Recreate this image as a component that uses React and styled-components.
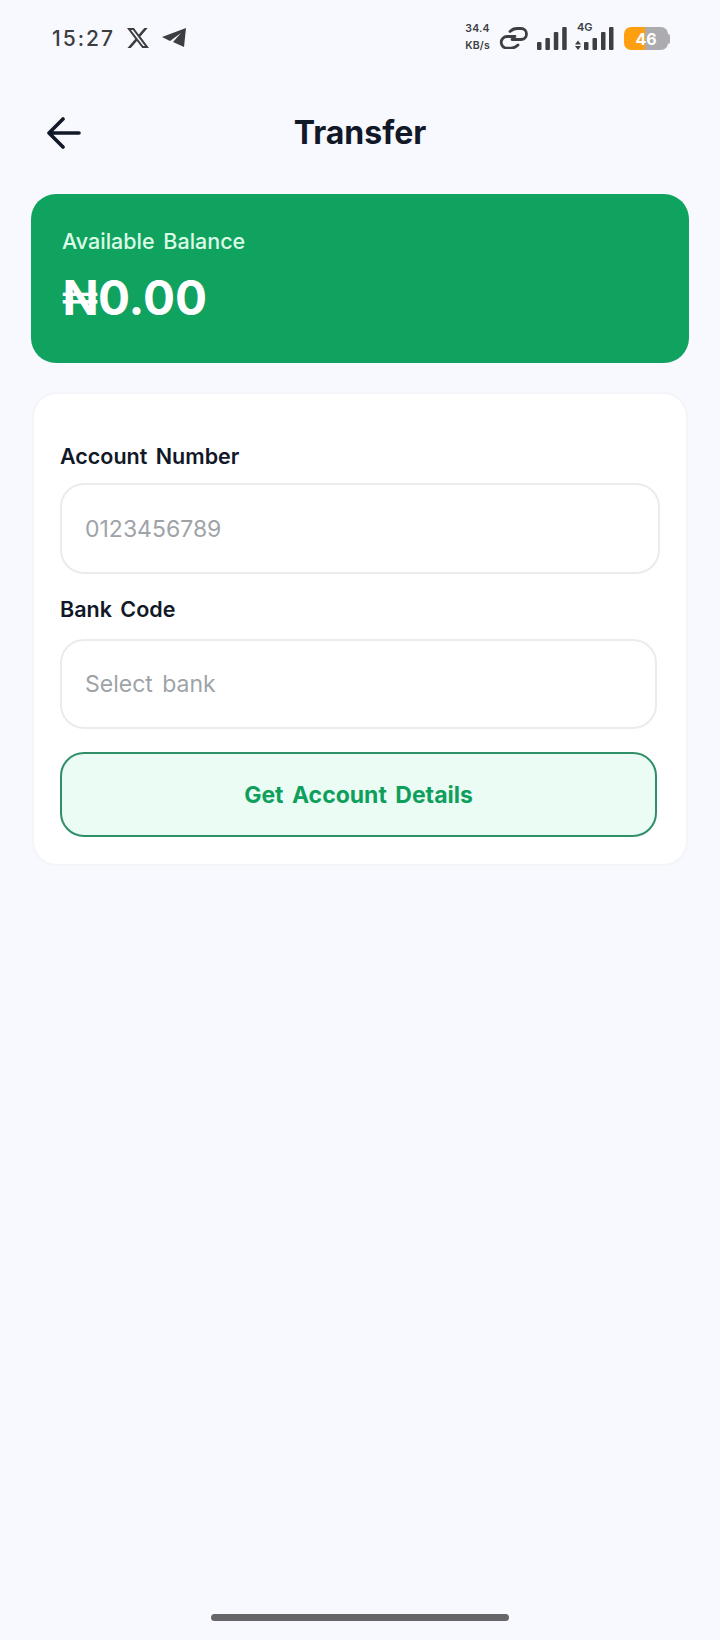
import React from "react";
import styled, { createGlobalStyle } from "styled-components";

const Global = createGlobalStyle`
  html, body { margin: 0; padding: 0; background: #f8f9fe; }
  * { box-sizing: border-box; }
`;
const Page = styled.div`
  width: 720px; height: 1640px; background: #f8f9fe; display: flex; flex-direction: column;
  font-family: Inter, "Liberation Sans", sans-serif; overflow: hidden;
`;
const StatusBar = styled.div`
  height: 76px; padding: 0 50px 0 52px; display: flex; align-items: center; justify-content: space-between; color: #3c3e42;
`;
const StatusLeft = styled.div`display: flex; align-items: center;`;
const StatusRight = styled.div`display: flex; align-items: center;`;
const Time = styled.span`font-size: 21px; font-weight: 500; letter-spacing: 2px; margin-right: 11px;`;
const Speed = styled.div`
  display: flex; flex-direction: column; align-items: center; font-size: 10.5px; line-height: 17px; font-weight: 600;
  letter-spacing: 0.2px; margin: 0 9px 2px 0;
`;
const Icon = styled.svg`display: block; flex: none; margin: ${p => p.$m || "0"};`;
const NetGroup = styled.div`position: relative; margin-left: 8px;`;
const NetLabel = styled.span`
  position: absolute; top: -5px; left: 2px; font-size: 11px; font-weight: 600; line-height: 12px;
`;
const Battery = styled.div`display: flex; align-items: center; margin: 1px 0 0 10px;`;
const BatteryBody = styled.div`
  width: 44px; height: 23px; border-radius: 7px; overflow: hidden; display: flex; align-items: center; justify-content: center;
  font-size: 16px; font-weight: 700; color: #fff; background: linear-gradient(to right, #ff9f0f 0 48%, #acacb0 48% 100%);
`;
const BatteryCap = styled.div`width: 2px; height: 10px; background: #acacb0; border-radius: 0 2px 2px 0;`;
const Header = styled.header`
  height: 100px; padding: 13px 47px 0; display: grid; grid-template-columns: 1fr auto 1fr; align-items: center;
`;
const Title = styled.h1`
  margin: 0; font-size: 32px; font-weight: 700; color: #111827;
`;
const Content = styled.main`padding: 18px 31px 0; display: flex; flex-direction: column; gap: 29px;`;
const Balance = styled.section`
  height: 169px; background: #10a25f; border-radius: 25px; padding: 34px 31px 0; color: #fff;
`;
const BalanceLabel = styled.div`font-size: 21.5px; line-height: 27px; font-weight: 500; color: #dcfce7; word-spacing: 3px;`;
const Amount = styled.div`font-size: 47.5px; line-height: 58px; font-weight: 700; margin-top: 14px;`;
const FormCard = styled.section`
  height: 474px; margin: 0 1px; background: #fff; border: 2px solid #f3f5f9; border-radius: 25px; padding: 49px 26px 0;
  display: flex; flex-direction: column;
`;
const Label = styled.label`
  display: block; font-size: 21.5px; line-height: 27px; font-weight: 600; color: #111827; word-spacing: 3px; margin-bottom: ${p => p.$mb};
`;
const Input = styled.input`
  display: block; height: ${p => p.$h}px; width: ${p => p.$w}px; flex: none; border: 2px solid #ebebee; border-radius: 24px; background: #fff;
  padding: 0 23px; font: 400 23px Inter, "Liberation Sans", sans-serif; outline: none; margin-bottom: ${p => p.$mb};
  word-spacing: 3px;
  &::placeholder { color: #9ea3a8; opacity: 1; }
`;
const Action = styled.button`
  display: block; width: 597px; height: 85px; flex: none; border: 2px solid #2f8f68; border-radius: 24px; background: #eafcf4;
  color: #0f9f5c; font: 700 23px Inter, "Liberation Sans", sans-serif; word-spacing: 3px; padding: 0;
`;
const HomeRow = styled.div`margin-top: auto; height: 26px; display: flex; justify-content: center;`;
const HomeBar = styled.div`width: 298px; height: 7px; border-radius: 4px; background: #666669;`;

export default function App() {
  return (
    <Page>
      <Global />
      <StatusBar>
        <StatusLeft>
          <Time>15:27</Time>
          <Icon width="24" height="22" viewBox="0 0 24 24" fill="#3c3e42" $m="0 12px 0 0">
            <path d="M18.9 1.2h3.7l-8 9.2L24 22.8h-7.4l-5.8-7.6-6.6 7.6H.5L9 13 0 1.2h7.6l5.2 6.9 6.1-6.9zm-1.3 19.4h2L6.5 3.3H4.3l13.3 17.3z" />
          </Icon>
          <Icon width="25" height="22" viewBox="0 0 25 22" fill="#3c3e42">
            <path d="M0 10 L24 1 L22 20 L11 15 L19 6 L8 14 Z" />
          </Icon>
        </StatusLeft>
        <StatusRight>
          <Speed><span>34.4</span><span>KB/s</span></Speed>
          <Icon width="30" height="22" viewBox="0 0 30 22" fill="none" stroke="#3c3e42" strokeWidth="2.8" strokeLinecap="round" $m="0 8px 0 0">
            <path d="M16 9.5H8a5.8 5.8 0 0 0 0 11.6h4c3 0 5-1 7-3" />
            <path d="M13 12.5h9a5.5 5.5 0 0 0 0-11h-4c-3 0-5 1-7 3" />
          </Icon>
          <Icon width="30" height="24" viewBox="0 0 30 24" fill="#3c3e42">
            <rect x="0" y="16" width="4.5" height="8" rx="1" />
            <rect x="8.4" y="12" width="4.5" height="12" rx="1" />
            <rect x="16.8" y="6" width="4.5" height="18" rx="1" />
            <rect x="25.2" y="1" width="4.5" height="23" rx="1" />
          </Icon>
          <NetGroup>
            <NetLabel>4G</NetLabel>
            <Icon width="39" height="24" viewBox="0 0 39 24" fill="#3c3e42">
              <path d="M0 18.5l3-4 3 4zM0 20l3 4 3-4z" />
              <rect x="9" y="16" width="4.5" height="8" rx="1" />
              <rect x="17.5" y="12" width="4.5" height="12" rx="1" />
              <rect x="26" y="6" width="4.5" height="18" rx="1" />
              <rect x="34" y="1" width="4.5" height="23" rx="1" />
            </Icon>
          </NetGroup>
          <Battery>
            <BatteryBody>46</BatteryBody>
            <BatteryCap />
          </Battery>
        </StatusRight>
      </StatusBar>
      <Header>
        <Icon width="34" height="32" viewBox="0 0 34 32" fill="none" stroke="#111827" strokeWidth="3.6" strokeLinecap="round" strokeLinejoin="round">
          <path d="M32 16H2M16 2 2 16l14 14" />
        </Icon>
        <Title>Transfer</Title>
      </Header>
      <Content>
        <Balance>
          <BalanceLabel>Available Balance</BalanceLabel>
          <Amount>₦0.00</Amount>
        </Balance>
        <FormCard>
          <Label $mb="13px">Account Number</Label>
          <Input $w={600} $h={91} $mb="22px" placeholder="0123456789" />
          <Label $mb="16px">Bank Code</Label>
          <Input $w={597} $h={90} $mb="23px" placeholder="Select bank" />
          <Action>Get Account Details</Action>
        </FormCard>
      </Content>
      <HomeRow><HomeBar /></HomeRow>
    </Page>
  );
}
